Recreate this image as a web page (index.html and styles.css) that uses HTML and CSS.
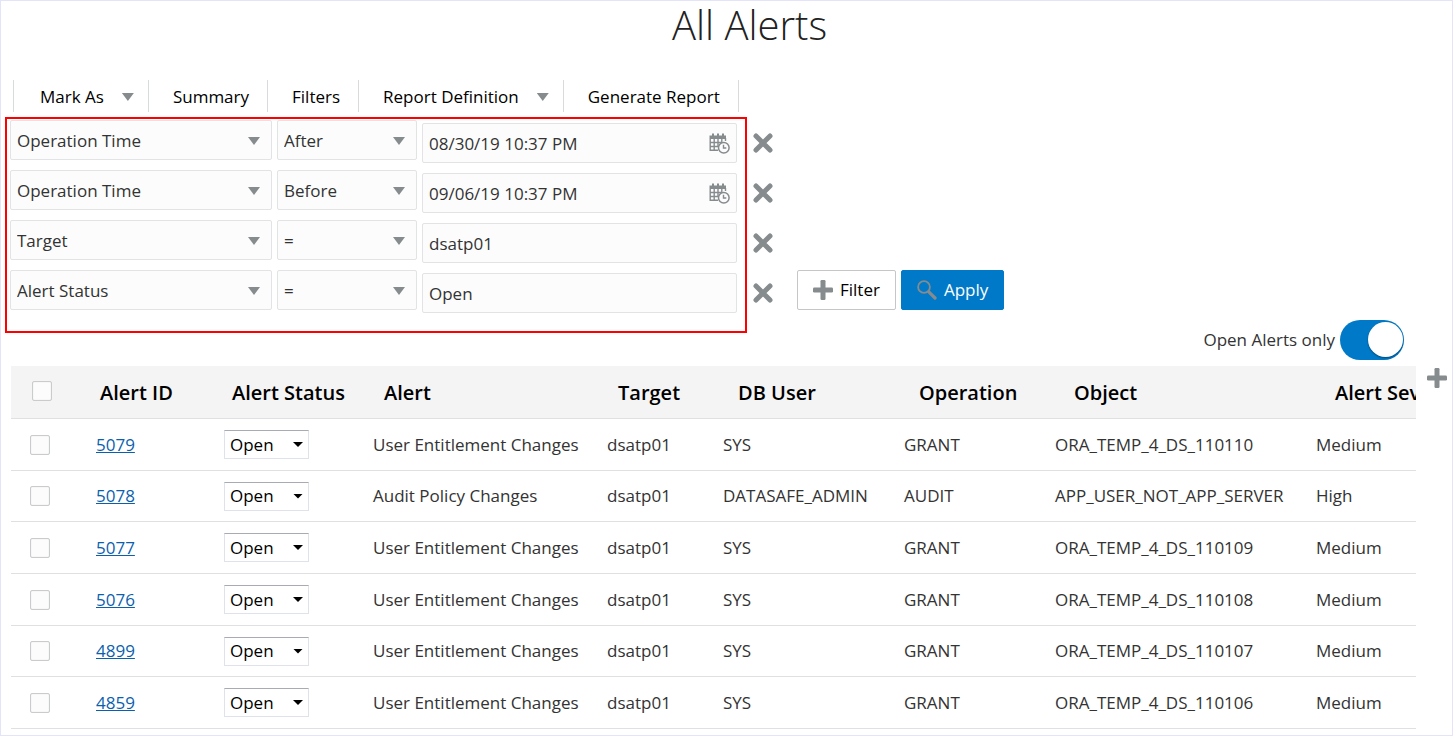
FILE: index.html
```html
<!DOCTYPE html>
<html lang="en">
<head>
<meta charset="utf-8">
<title>All Alerts</title>
<link rel="stylesheet" href="styles.css">
</head>
<body>
<svg class="sprite" aria-hidden="true">
  <symbol id="i-x" viewBox="0 0 20 20"><path d="M3 3L17 17M17 3L3 17" stroke="currentColor" stroke-width="5" stroke-linecap="round"/></symbol>
  <symbol id="i-plus" viewBox="0 0 20 20"><rect x="7.5" y="0" width="5" height="20" rx="1.2" fill="currentColor"/><rect x="0" y="7.5" width="20" height="5" rx="1.2" fill="currentColor"/></symbol>
  <symbol id="i-search" viewBox="0 0 20 20"><circle cx="7" cy="7" r="5.9" fill="none" stroke="currentColor" stroke-width="1.8"/><path d="M11.8 11.8L18 18" stroke="currentColor" stroke-width="3.2" stroke-linecap="round"/></symbol>
  <symbol id="i-cal" viewBox="0 0 21 21"><path d="M3 0.5h2v2h3v-2h2v2h3v-2h2v2h2V6H0.5V2.5H3z" fill="currentColor"/><path d="M1.2 6v11.3H9M1 9.5h12M1 13.5h8M5.2 6v11.3M9 6v8M12.8 6v3.5M16.5 5v3" fill="none" stroke="currentColor" stroke-width="1.4"/><circle cx="14.8" cy="14.8" r="5.3" fill="#fcfcfc" stroke="currentColor" stroke-width="1.5"/><path d="M14.5 11.8v3.2h2.8" fill="none" stroke="currentColor" stroke-width="1.4"/></symbol>
</svg>
<main class="page">
  <h1 class="title">All Alerts</h1>
  <nav class="toolbar">
    <button class="tool tool-menu">Mark As</button>
    <button class="tool">Summary</button>
    <button class="tool">Filters</button>
    <button class="tool tool-menu">Report Definition</button>
    <button class="tool">Generate Report</button>
  </nav>
  <section class="filters">
    <div class="filter-box">
      <div class="filter-row">
        <div class="combo combo-field"><select aria-label="Field"><option>Operation Time</option></select></div>
        <div class="combo combo-op"><select aria-label="Operator"><option>After</option></select></div>
        <div class="value"><input type="text" aria-label="Value" value="08/30/19 10:37 PM"><button class="pick" aria-label="Select date and time"><svg><use href="#i-cal"/></svg></button></div>
      </div>
      <div class="filter-row">
        <div class="combo combo-field"><select aria-label="Field"><option>Operation Time</option></select></div>
        <div class="combo combo-op"><select aria-label="Operator"><option>Before</option></select></div>
        <div class="value"><input type="text" aria-label="Value" value="09/06/19 10:37 PM"><button class="pick" aria-label="Select date and time"><svg><use href="#i-cal"/></svg></button></div>
      </div>
      <div class="filter-row">
        <div class="combo combo-field"><select aria-label="Field"><option>Target</option></select></div>
        <div class="combo combo-op"><select aria-label="Operator"><option>=</option></select></div>
        <div class="value"><input type="text" aria-label="Value" value="dsatp01"></div>
      </div>
      <div class="filter-row">
        <div class="combo combo-field"><select aria-label="Field"><option>Alert Status</option></select></div>
        <div class="combo combo-op"><select aria-label="Operator"><option>=</option></select></div>
        <div class="value"><input type="text" aria-label="Value" value="Open"></div>
      </div>
    </div>
    <div class="removes">
      <button class="icon-btn" aria-label="Remove filter"><svg><use href="#i-x"/></svg></button>
      <button class="icon-btn" aria-label="Remove filter"><svg><use href="#i-x"/></svg></button>
      <button class="icon-btn" aria-label="Remove filter"><svg><use href="#i-x"/></svg></button>
      <button class="icon-btn" aria-label="Remove filter"><svg><use href="#i-x"/></svg></button>
    </div>
    <div class="actions">
      <button class="btn"><svg><use href="#i-plus"/></svg>Filter</button>
      <button class="btn btn-primary"><svg><use href="#i-search"/></svg>Apply</button>
    </div>
    <label class="switch">Open Alerts only<input type="checkbox" checked></label>
  </section>
  <section class="grid">
    <div class="grid-scroll">
      <table>
        <colgroup><col class="c-check"><col class="c-id"><col class="c-status"><col class="c-alert"><col class="c-target"><col class="c-user"><col class="c-operation"><col class="c-object"><col class="c-severity"></colgroup>
        <thead>
          <tr><th><input class="check" type="checkbox" aria-label="Select all"></th><th class="h-s">Alert ID</th><th class="h-m">Alert Status</th><th class="h-l">Alert</th><th class="h-l">Target</th><th class="h-xl">DB User</th><th class="h-xl">Operation</th><th class="h-xxl">Object</th><th class="h-xxl">Alert Severity</th></tr>
        </thead>
        <tbody>
          <tr><td><input class="check" type="checkbox" aria-label="Select 5079"></td><td><a href="#">5079</a></td><td><div class="status"><select aria-label="Status"><option>Open</option></select></div></td><td>User Entitlement Changes</td><td>dsatp01</td><td>SYS</td><td>GRANT</td><td>ORA_TEMP_4_DS_110110</td><td>Medium</td></tr>
          <tr><td><input class="check" type="checkbox" aria-label="Select 5078"></td><td><a href="#">5078</a></td><td><div class="status"><select aria-label="Status"><option>Open</option></select></div></td><td>Audit Policy Changes</td><td>dsatp01</td><td>DATASAFE_ADMIN</td><td>AUDIT</td><td>APP_USER_NOT_APP_SERVER</td><td>High</td></tr>
          <tr><td><input class="check" type="checkbox" aria-label="Select 5077"></td><td><a href="#">5077</a></td><td><div class="status"><select aria-label="Status"><option>Open</option></select></div></td><td>User Entitlement Changes</td><td>dsatp01</td><td>SYS</td><td>GRANT</td><td>ORA_TEMP_4_DS_110109</td><td>Medium</td></tr>
          <tr><td><input class="check" type="checkbox" aria-label="Select 5076"></td><td><a href="#">5076</a></td><td><div class="status"><select aria-label="Status"><option>Open</option></select></div></td><td>User Entitlement Changes</td><td>dsatp01</td><td>SYS</td><td>GRANT</td><td>ORA_TEMP_4_DS_110108</td><td>Medium</td></tr>
          <tr><td><input class="check" type="checkbox" aria-label="Select 4899"></td><td><a href="#">4899</a></td><td><div class="status"><select aria-label="Status"><option>Open</option></select></div></td><td>User Entitlement Changes</td><td>dsatp01</td><td>SYS</td><td>GRANT</td><td>ORA_TEMP_4_DS_110107</td><td>Medium</td></tr>
          <tr><td><input class="check" type="checkbox" aria-label="Select 4859"></td><td><a href="#">4859</a></td><td><div class="status"><select aria-label="Status"><option>Open</option></select></div></td><td>User Entitlement Changes</td><td>dsatp01</td><td>SYS</td><td>GRANT</td><td>ORA_TEMP_4_DS_110106</td><td>Medium</td></tr>
        </tbody>
      </table>
    </div>
    <button class="icon-btn" aria-label="Add column"><svg><use href="#i-plus"/></svg></button>
  </section>
</main>
</body>
</html>
```
FILE: styles.css
```css
* { box-sizing: border-box; }
body { margin: 0; background: #fff; color: #333; font: 17px/24px "Open Sans", "Noto Sans", sans-serif; }
button, input, select { font: inherit; color: inherit; margin: 0; }
button { border: 0; padding: 0; background: none; cursor: pointer; }
.sprite { display: none; }
.page { min-height: 100vh; border: 1px solid #e3e3fa; }

.title { margin: 0; padding: 0 0 0 46px; text-align: center; font-size: 40px; line-height: 48px; font-weight: 300; color: #222; }

.toolbar { display: flex; margin: 31px 0 5px 12px; color: #000; }
.tool { height: 32px; padding: 2px 18px 0 24px; border-right: 1px solid #d9dadb; display: flex; align-items: center; }
.tool:first-child { border-left: 1px solid #d9dadb; padding-left: 26px; }
.tool-menu { gap: 18px; padding-right: 14px; }
.tool-menu::after, .combo::after { content: ""; width: 12px; height: 8px; background: #868b8e; clip-path: polygon(0 0, 100% 0, 50% 100%); }

.filters { display: flex; align-items: flex-start; padding: 0 48px 0 4px; }
.filter-box { display: flex; flex-direction: column; gap: 7px; padding: 1px 8px 18px 3px; border: 2px solid #f00; }
.filter-row { display: flex; align-items: flex-start; gap: 5px; }
.combo { display: grid; align-items: center; }
.combo-field { width: 262px; }
.combo-op { width: 140px; }
.combo > select, .combo::after { grid-area: 1 / 1; }
.combo::after { justify-self: end; margin: 2px 12px 0 0; pointer-events: none; }
.combo > select, .value { height: 40px; border: 1px solid #e2e3e4; border-radius: 2px; background: #fcfcfc; }
.combo > select { appearance: none; width: 100%; padding: 2px 6px 0; }
.value { width: 315px; margin-top: 3px; display: flex; align-items: center; padding: 0 6px; }
.value input { flex: 1; min-width: 0; border: 0; padding: 2px 0 0; background: none; }
.pick, .pick svg { display: block; width: 21px; height: 21px; color: #868b8e; }
.icon-btn, .icon-btn svg { display: block; width: 20px; height: 20px; color: #868b8e; }
.removes { display: flex; flex-direction: column; gap: 30px; padding: 16px 24px 0 6px; }
.actions { display: flex; gap: 5px; align-self: flex-end; margin-bottom: 50px; }
.btn { height: 40px; padding: 0 15px; border: 1px solid #c4c6c7; border-radius: 2px; display: flex; align-items: center; gap: 7px; color: #000; }
.btn svg { width: 20px; height: 20px; color: #868b8e; }
.btn-primary { background: #007ac8; border-color: #007ac8; color: #fff; }
.switch { margin-left: auto; margin-top: 203px; display: flex; align-items: center; gap: 5px; }
.switch input { appearance: none; width: 64px; height: 40px; border-radius: 20px; background: #007ac8; padding: 2px 1px; display: flex; justify-content: flex-start; }
.switch input:checked { justify-content: flex-end; }
.switch input::before { content: ""; width: 35px; height: 35px; border-radius: 50%; background: #fff; box-shadow: 0 1px 2px rgba(0, 0, 0, .4); }

.grid { display: flex; gap: 11px; padding: 6px 5px 6px 10px; align-items: flex-start; }
.grid-scroll { flex: 1; min-width: 0; overflow: hidden; }
.grid > .icon-btn { margin-top: 2px; }
table { table-layout: fixed; border-collapse: separate; border-spacing: 0; width: 1455px; }
.c-check { width: 85px; } .c-id { width: 128px; } .c-status { width: 149px; } .c-alert { width: 234px; }
.c-target { width: 116px; } .c-user { width: 181px; } .c-operation { width: 151px; } .c-object { width: 261px; } .c-severity { width: 150px; }
th, td { height: 52px; padding: 0; text-align: left; white-space: nowrap; border-bottom: 1px solid #dfe0e1; }
tbody tr:nth-child(3n+2) td { height: 51px; }
th { height: 53px; padding-top: 2px; background: #f4f4f4; color: #000; font-size: 20px; font-weight: 600; }
.h-s { padding-left: 4px; } .h-m { padding-left: 8px; } .h-l { padding-left: 11px; } .h-xl { padding-left: 15px; } .h-xxl { padding-left: 19px; }
.check { appearance: none; display: block; width: 20px; height: 20px; margin-left: 19px; border: 1px solid #c9cbcc; border-radius: 2px; background: #fcfcfc; box-shadow: inset 0 0 1px #c9cbcc; }
th .check { margin: 0 0 4px 21px; }
a { color: #0b5fae; }
.status { display: grid; align-items: center; width: 85px; color: #000; }
.status select { appearance: none; grid-area: 1 / 1; height: 29px; padding: 0 5px; border: 1px solid #dfe2ea; border-top-color: #a9abb3; background: #fff; }
.status::after { content: ""; grid-area: 1 / 1; justify-self: end; margin-right: 6px; width: 10px; height: 5px; background: #000; clip-path: polygon(0 0, 100% 0, 50% 100%); pointer-events: none; }
```
